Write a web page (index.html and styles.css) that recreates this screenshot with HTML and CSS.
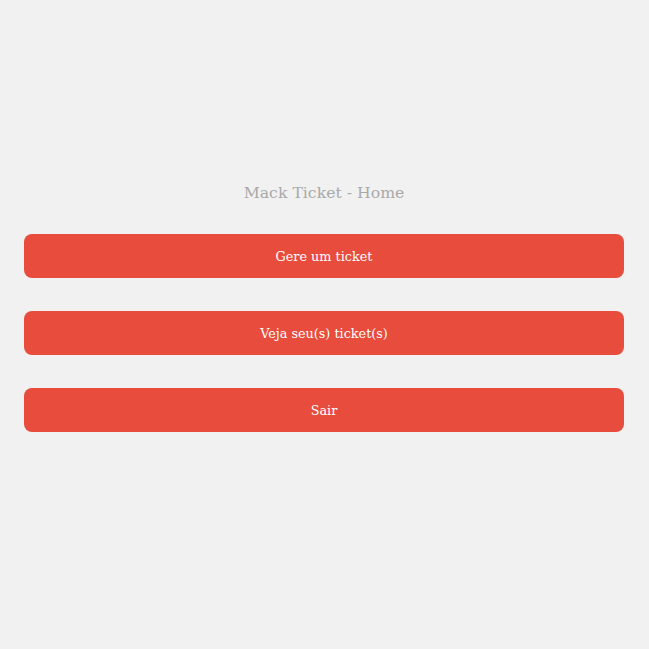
FILE: index.html
```html
<!DOCTYPE html>
<html lang="pt-BR">
<head>
<meta charset="utf-8">
<title>Mack Ticket - Home</title>
<link rel="stylesheet" href="styles.css">
</head>
<body>
<main class="page">
  <h1 class="title">Mack Ticket - Home</h1>
  <nav class="actions">
    <button class="btn">Gere um ticket</button>
    <button class="btn">Veja seu(s) ticket(s)</button>
    <button class="btn">Sair</button>
  </nav>
</main>
</body>
</html>
```

FILE: styles.css
```css
html, body {
  margin: 0;
  padding: 0;
  background: #f1f1f1;
  font-family: "DejaVu Serif", "Liberation Serif", serif;
}
.page {
  padding: 181px 25px 0 24px;
  display: flex;
  flex-direction: column;
}
.title {
  margin: 0;
  font-size: 15.7px;
  font-weight: normal;
  color: #a9a9a9;
  text-align: center;
  line-height: 24px;
}
.actions {
  margin-top: 29px;
  display: flex;
  flex-direction: column;
  gap: 33px;
}
.btn {
  height: 44px;
  border: none;
  border-radius: 8px;
  background: #e74c3c;
  color: #ffffff;
  font-family: inherit;
  font-size: 12.8px;
  padding: 0;
}
```
